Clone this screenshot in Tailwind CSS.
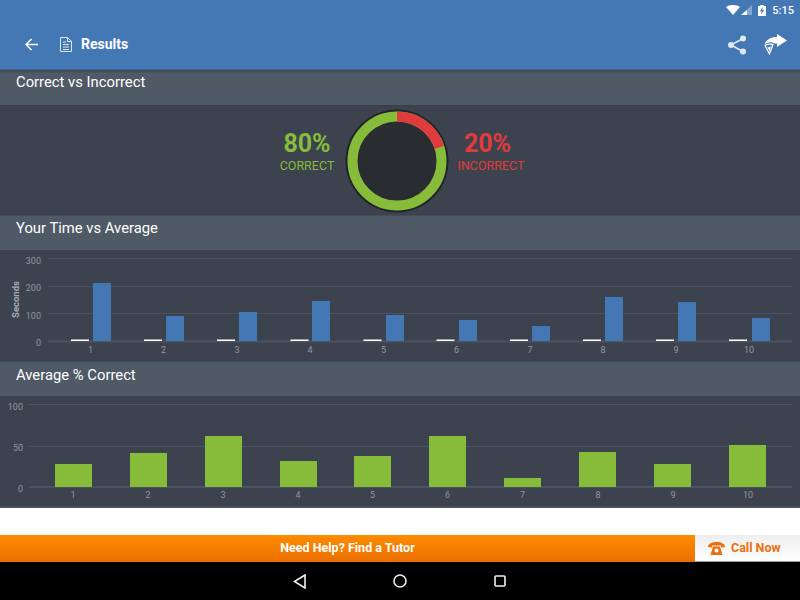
<!DOCTYPE html>
<html lang="en">
<head>
<meta charset="UTF-8">
<title>Results</title>
<script src="https://cdn.jsdelivr.net/npm/@tailwindcss/browser@4"></script>
</head>
<body class="bg-white font-['Roboto',sans-serif]">
<div class="w-[800px] h-[600px] flex flex-col overflow-hidden">

  <!-- app bar -->
  <div class="h-[70px] bg-[#4478b5] border-b border-[#3b659a] flex flex-col shrink-0 text-white">
    <div class="h-[20px] flex items-center justify-end pr-[6px]">
      <svg width="14" height="10" viewBox="0 0 14 10"><path d="M0 2C4-.7 10-.7 14 2L7 10Z" fill="#fff"/></svg>
      <svg class="ml-[1px]" width="11" height="10" viewBox="0 0 11 10"><path d="M11 0V10H0Z" fill="#fff" fill-opacity=".35"/><path d="M6 5V10H0Z" fill="#fff"/></svg>
      <svg class="ml-[6px]" width="8" height="11" viewBox="0 0 8 11"><path d="M2.200 0h3.600v1H8v10H0V1h2.200Z" fill="#fff"/><path d="M4.600 2 2 6.300h1.600L3 9.500l3-4.500H4.400Z" fill="#4478b5"/></svg>
      <span class="ml-[6px] text-[11px] font-medium leading-none">5:15</span>
    </div>
    <div class="flex-1 flex items-center">
      <svg class="ml-[25px]" width="13" height="13" viewBox="0 0 14 14" fill="none" stroke="#fff" stroke-width="1.600"><path d="M14 7H1.500M7 1 1 7l6 6"/></svg>
      <svg class="ml-[22px]" width="12" height="15" viewBox="0 0 12 15" fill="none" stroke="#dbe6f3" stroke-width="1"><path d="M.5.5h7l4 4v10H.5Z"/><path d="M7.500.5v4h4M3 5h3M3 7.500h6M3 10h6M3 12.500h6"/></svg>
      <span class="ml-[9px] text-[14px] font-bold">Results</span>
      <svg class="ml-auto" width="18" height="20" viewBox="0 0 18 20" fill="#dfe8f3"><circle cx="15" cy="3.500" r="3"/><circle cx="3" cy="10" r="3"/><circle cx="15" cy="16.500" r="3"/><path d="M3 10 15 3.500M3 10l12 6.500" stroke="#dfe8f3" stroke-width="1.500"/></svg>
      <svg class="ml-[18px] mr-[13px]" width="23" height="21" viewBox="0 0 23 21"><path d="M23 6.500 13 0v3C7 3 2 5.500.5 10.500 3 8.500 6 8 8 8.500c2 1 4 1 5 1V13Z" fill="#fff"/><path d="M1 11.500 5.500 20l3.500-9.500C6 9.800 3 10 1 11.500Z" fill="none" stroke="#fff" stroke-width="1.300"/><path d="M3.500 13.500 5.500 17l1.500-4.500Z" fill="#fff"/></svg>
    </div>
  </div>

  <!-- correct vs incorrect -->
  <div class="h-[35px] shrink-0 bg-gradient-to-b from-[#41474f] to-[#4f5a66] to-[10%] pl-[16px] pt-[2px] text-[14.800px] leading-[20px] text-white">Correct vs Incorrect</div>
  <div class="h-[110px] shrink-0 bg-[#3d434e] border-t border-[#383d47] flex items-center pl-[280px]">
    <div class="w-[54px] flex flex-col items-center mr-[11px] mb-[20px] text-[#86bc39]">
      <span class="text-[25px] font-bold leading-[30px]">80%</span>
      <span class="text-[12.500px] leading-[14px] whitespace-nowrap">CORRECT</span>
    </div>
    <svg width="104" height="104" viewBox="0 0 104 104">
      <circle cx="52" cy="52" r="51.500" fill="#20242a"/>
      <circle cx="52" cy="52" r="44.500" fill="#292d32" stroke="#86bc39" stroke-width="10"/>
      <circle cx="52" cy="52" r="44.500" fill="none" stroke="#e03b3c" stroke-width="10" stroke-dasharray="55.900 300" transform="rotate(-90 52 52)"/>
    </svg>
    <div class="w-[66px] flex flex-col items-center ml-[9px] mb-[20px] text-[#e03b3c]">
      <span class="mr-[7px] text-[25px] font-bold leading-[30px]">20%</span>
      <span class="text-[12.500px] leading-[14px] whitespace-nowrap">INCORRECT</span>
    </div>
  </div>

  <!-- time vs average -->
  <div class="h-[35px] shrink-0 bg-[#4f5a66] border-t border-[#454c57] pl-[16px] pt-[2px] text-[14.800px] leading-[20px] text-white">Your Time vs Average</div>
  <svg class="shrink-0 block bg-[#3d434e]" width="800" height="111" viewBox="0 250 800 111" font-family="Roboto, sans-serif" font-size="9" fill="#8e96a3">
    <g stroke="#4c5360" stroke-width="1">
      <path d="M48 258.500H792M48 286.500H792M48 313.500H792"/>
      <path d="M48 341.500H792" stroke-width="2"/>
    </g>
    <g text-anchor="end">
      <text x="41" y="263.500">300</text><text x="41" y="291">200</text><text x="41" y="318.500">100</text><text x="41" y="345.500">0</text>
    </g>
    <text transform="translate(19 299.500) rotate(-90)" text-anchor="middle" font-size="9.500" font-weight="700" fill="#a3aab5">Seconds</text>
    <g text-anchor="middle">
      <text x="90.500" y="352.500">1</text><text x="163.500" y="352.500">2</text><text x="237" y="352.500">3</text><text x="310" y="352.500">4</text><text x="383.500" y="352.500">5</text><text x="456.500" y="352.500">6</text><text x="530" y="352.500">7</text><text x="603" y="352.500">8</text><text x="676" y="352.500">9</text><text x="749" y="352.500">10</text>
    </g>
    <g fill="#fff">
      <rect x="71" y="339.500" width="18" height="1.500"/><rect x="144" y="339.500" width="18" height="1.500"/><rect x="217" y="339.500" width="18" height="1.500"/><rect x="290.500" y="339.500" width="18" height="1.500"/><rect x="363.500" y="339.500" width="18" height="1.500"/><rect x="436.500" y="339.500" width="18" height="1.500"/><rect x="510" y="339.500" width="18" height="1.500"/><rect x="583" y="339.500" width="18" height="1.500"/><rect x="656" y="339.500" width="18" height="1.500"/><rect x="729" y="339.500" width="18" height="1.500"/>
    </g>
    <g fill="#4478b5">
      <rect x="93" y="283" width="18" height="58"/><rect x="166" y="316" width="18" height="25"/><rect x="239" y="312" width="18" height="29"/><rect x="312" y="301" width="18" height="40"/><rect x="386" y="315" width="18" height="26"/><rect x="459" y="320" width="18" height="21"/><rect x="532" y="326" width="18" height="15"/><rect x="605" y="297" width="18" height="44"/><rect x="678" y="302" width="18" height="39"/><rect x="752" y="318" width="18" height="23"/>
    </g>
  </svg>

  <!-- average correct -->
  <div class="h-[35px] shrink-0 bg-[#4f5a66] border-t border-[#454c57] pl-[16px] pt-[3px] text-[14.800px] leading-[20px] text-white">Average % Correct</div>
  <svg class="shrink-0 block bg-[#3d434e]" width="800" height="110" viewBox="0 396 800 110" font-family="Roboto, sans-serif" font-size="9" fill="#8e96a3">
    <g stroke="#4c5360" stroke-width="1">
      <path d="M29 404.500H792M29 446.500H792"/>
      <path d="M29 487H792" stroke-width="2"/>
    </g>
    <g text-anchor="end">
      <text x="23" y="409.500">100</text><text x="23" y="450.500">50</text><text x="23" y="491.500">0</text>
    </g>
    <g text-anchor="middle">
      <text x="73" y="497.500">1</text><text x="148" y="497.500">2</text><text x="223" y="497.500">3</text><text x="298" y="497.500">4</text><text x="372.500" y="497.500">5</text><text x="447.500" y="497.500">6</text><text x="522.500" y="497.500">7</text><text x="598" y="497.500">8</text><text x="673" y="497.500">9</text><text x="748" y="497.500">10</text>
    </g>
    <g fill="#86bc39">
      <rect x="55" y="464" width="37" height="23"/><rect x="130" y="453" width="37" height="34"/><rect x="205" y="436" width="37" height="51"/><rect x="280" y="461" width="37" height="26"/><rect x="354" y="456" width="37" height="31"/><rect x="429" y="436" width="37" height="51"/><rect x="504" y="478" width="37" height="9"/><rect x="579" y="452" width="37" height="35"/><rect x="654" y="464" width="37" height="23"/><rect x="729" y="445" width="37" height="42"/>
    </g>
  </svg>
  <div class="h-[2px] shrink-0 bg-[#4a515d]"></div>

  <!-- white gap -->
  <div class="flex-1 bg-white"></div>

  <!-- tutor banner -->
  <div class="h-[27px] shrink-0 flex">
    <div class="w-[695px] bg-gradient-to-b from-[#ff8c00] to-[#ea6f00] flex items-center justify-center text-white text-[12.500px] font-bold">Need Help? Find a Tutor</div>
    <div class="flex-1 bg-gradient-to-b from-[#eeeeee] to-white border-b border-[#999] flex items-center text-[#ea6f0f] text-[12.500px] font-bold">
      <svg class="ml-[13px]" width="17" height="13" viewBox="0 0 17 13" fill="#ea6f0f"><path d="M0 5C0 1.500 4 0 8.500 0S17 1.500 17 5L13 5.500V3.500H4V5.500Z"/><path d="M5 4.500h7l2.500 8.500H2.500Z"/><circle cx="8.500" cy="8.500" r="2" fill="#fff"/></svg>
      <span class="ml-[6px]">Call Now</span>
    </div>
  </div>

  <!-- nav bar -->
  <div class="h-[38px] shrink-0 bg-black flex items-center justify-center pr-[1px]">
    <svg width="13" height="15" viewBox="0 0 13 15" fill="none" stroke="#f0f0f0" stroke-width="1.600"><path d="M12 1 1.500 7.500 12 14Z"/></svg>
    <svg class="ml-[87px]" width="14" height="14" viewBox="0 0 14 14" fill="none" stroke="#f0f0f0" stroke-width="1.600"><circle cx="7" cy="7" r="6"/></svg>
    <svg class="ml-[87px]" width="12" height="12" viewBox="0 0 12 12" fill="none" stroke="#f0f0f0" stroke-width="1.600"><rect x="1" y="1" width="10" height="10" rx="1"/></svg>
  </div>
</div>
</body>
</html>
